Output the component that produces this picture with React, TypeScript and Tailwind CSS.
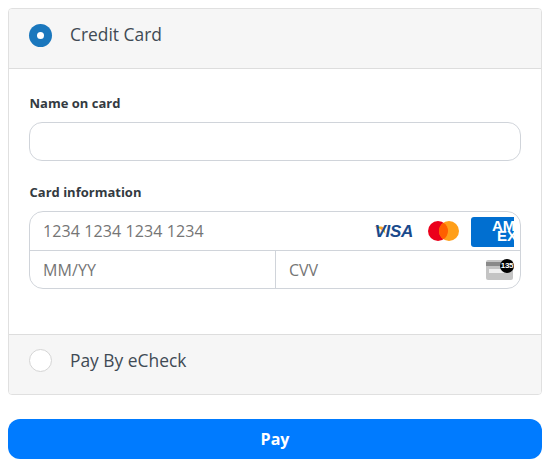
const font = "font-['Open_Sans',sans-serif]";

function VisaIcon() {
  return (
    <div className="relative w-[39px] h-[16px] mt-px flex items-center justify-end">
      <svg className="absolute left-0 top-[2px]" width="12" height="10" viewBox="0 0 12 10">
        <path d="M0 0.5 H7 C9 0.5 10 1.5 10.5 3.5 L11.5 8 C9.5 4.5 5 1.8 0 0.5 Z" fill="#f7a823" />
      </svg>
      <span className="relative font-['Liberation_Sans',sans-serif] italic font-bold text-[17px] leading-none tracking-[-0.3px] text-[#1a4a8c]">VISA</span>
    </div>
  );
}

function MastercardIcon() {
  return (
    <svg className="block" width="31" height="20" viewBox="0 0 31 20">
      <circle cx="10" cy="10" r="10" fill="#eb001b" />
      <circle cx="21" cy="10" r="10" fill="#ff9f1a" />
      <path d="M15.5 1.65 A10 10 0 0 1 15.5 18.35 A10 10 0 0 1 15.5 1.65 Z" fill="#ff5f00" />
    </svg>
  );
}

function AmexIcon() {
  return (
    <div className="w-[43px] h-[30px] mt-[2px] bg-[#016fd0] rounded-l-[3px] overflow-hidden flex flex-col justify-center pb-[3px]">
      <span className="font-['Liberation_Sans',sans-serif] font-bold text-[15px] leading-[11px] text-white pl-[21px] whitespace-nowrap">AM</span>
      <span className="font-['Liberation_Sans',sans-serif] font-bold text-[15px] leading-[10px] text-white pl-[26px] whitespace-nowrap">EX</span>
    </div>
  );
}

function CvvIcon() {
  return (
    <div className="relative w-[27px] h-[21px]">
      <div className="absolute left-0 bottom-0 w-[27px] h-[20px] bg-[#c4c4c4] rounded-[2px] overflow-hidden flex flex-col">
        <div className="h-[4px] mt-[2px] bg-[#8a8a8a]" />
        <div className="h-[4px] w-[17px] mt-[3px] ml-[3px] bg-[#efefef]" />
      </div>
      <div className="absolute right-[-1px] top-0 w-[14px] h-[14px] rounded-full bg-black flex items-center justify-center">
        <span className="font-['Liberation_Sans',sans-serif] font-bold text-[8px] tracking-[-0.3px] leading-none text-white">135</span>
      </div>
    </div>
  );
}

export default function App() {
  return (
    <div className={`${font} w-[550px] h-[470px] bg-white px-2 pt-2`}>
      <div className="h-[387px] border border-[#e0e0e0] rounded-[4px] overflow-hidden flex flex-col">
        <div className="h-[60px] bg-[#f6f6f6] border-b border-[#dddddd] flex items-center pl-[20px] pb-[6px] gap-[18px] shrink-0">
          <div className="w-[23px] h-[23px] rounded-full bg-[#1a77bd] flex items-center justify-center">
            <div className="w-[7px] h-[7px] rounded-full bg-white" />
          </div>
          <span className="text-[17.4px] mb-[2px] text-[#3f4a54]">Credit Card</span>
        </div>

        <div className="flex-1 px-[20px] pt-[24px]">
          <label className="block text-[13px] font-bold leading-[20px] text-[#333a41] pl-[0.5px]">Name on card</label>
          <div className="mt-[9px] h-[39px] border border-[#d0d4da] rounded-[13px]" />

          <label className="block mt-[21px] text-[13px] font-bold leading-[20px] text-[#333a41] pl-[0.5px]">Card information</label>
          <div className="mt-[9px] h-[78px] border border-[#d0d4da] rounded-[14px] flex flex-col overflow-hidden">
            <div className="h-[39px] border-b border-[#d0d4da] flex items-center pl-[13px] pr-[6px] shrink-0">
              <span className="flex-1 text-[16px] tracking-[0.1px] text-[#757575]">1234 1234 1234 1234</span>
              <div className="flex items-center">
                <VisaIcon />
                <div className="ml-[15px] mr-[12px]">
                  <MastercardIcon />
                </div>
                <AmexIcon />
              </div>
            </div>
            <div className="flex-1 flex">
              <div className="w-[246px] border-r border-[#d0d4da] flex items-center pl-[13px]">
                <span className="text-[16px] tracking-[0.1px] text-[#757575]">MM/YY</span>
              </div>
              <div className="flex-1 flex items-center justify-between pl-[13px] pr-[7px]">
                <span className="text-[16px] text-[#757575]">CVV</span>
                <CvvIcon />
              </div>
            </div>
          </div>
        </div>

        <div className="h-[60px] bg-[#f6f6f6] border-t border-[#dddddd] flex items-center pl-[20px] pb-[8px] gap-[18px] shrink-0">
          <div className="w-[23px] h-[23px] rounded-full bg-white border border-[#d5d5d5]" />
          <span className="text-[17.4px] text-[#3f4a54]">Pay By eCheck</span>
        </div>
      </div>

      <button className="mt-[24px] w-full h-[40px] rounded-[12px] bg-[#007bff] text-white text-[16px] font-bold flex items-center justify-center">
        Pay
      </button>
    </div>
  );
}
